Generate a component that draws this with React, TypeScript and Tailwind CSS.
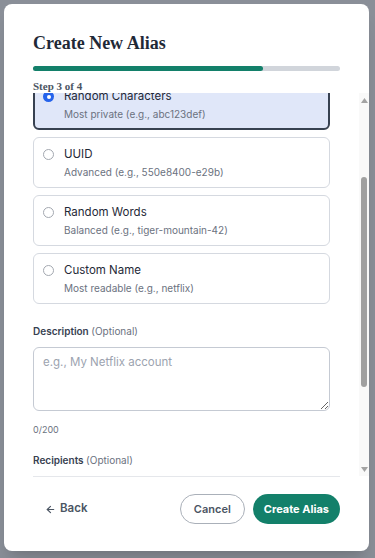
import React, { useEffect, useRef } from 'react';
import { ArrowLeft, ChevronDown } from 'lucide-react';

interface FormatOption {
  id: string;
  title: string;
  hint: string;
}

const formats: FormatOption[] = [
  { id: 'random', title: 'Random Characters', hint: 'Most private (e.g., abc123def)' },
  { id: 'uuid', title: 'UUID', hint: 'Advanced (e.g., 550e8400-e29b)' },
  { id: 'words', title: 'Random Words', hint: 'Balanced (e.g., tiger-mountain-42)' },
  { id: 'custom', title: 'Custom Name', hint: 'Most readable (e.g., netflix)' },
];

const FormatCard: React.FC<{ option: FormatOption; selected: boolean; cardRef?: React.Ref<HTMLLabelElement> }> = ({
  option,
  selected,
  cardRef,
}) => {
  return (
    <label
      ref={cardRef}
      className={
        selected
          ? 'flex items-start gap-[10px] rounded-md border-2 border-[#374151] bg-[#e0e7f9] pl-[8px] py-[6px]'
          : 'flex items-start gap-[10px] rounded-md border border-[#d5d9e0] bg-white pl-[9px] py-[7px]'
      }
    >
      <span className="flex h-[19px] items-center">
        {selected ? (
          <span className="flex h-[11px] w-[11px] items-center justify-center rounded-full bg-[#2563eb]">
            <span className="h-[4px] w-[4px] rounded-full bg-white" />
          </span>
        ) : (
          <span className="h-[11px] w-[11px] rounded-full border border-[#a3a8b0] bg-white" />
        )}
      </span>
      <span className="flex flex-col">
        <span className="text-[11.5px] leading-[19px] text-[#1f2937]">{option.title}</span>
        <span className="text-[10px] leading-4 text-[#6b7280]">{option.hint}</span>
      </span>
    </label>
  );
};

// drawn scroll track, the browser hides its own
const ScrollTrack: React.FC = () => (
  <div className="flex w-[10px] flex-col items-center bg-[#f9f9f9]">
    <svg width="7" height="5" viewBox="0 0 7 5" className="mt-[5px]">
      <path d="M3.5 0 L7 5 L0 5 Z" fill="#a3a3a3" />
    </svg>
    <div className="mt-[74px] h-[210px] w-[6px] rounded-full bg-[#a0a0a0]" />
    <div className="flex-1" />
    <svg width="7" height="5" viewBox="0 0 7 5" className="mb-[4px]">
      <path d="M0 0 L7 0 L3.5 5 Z" fill="#a3a3a3" />
    </svg>
  </div>
);

export default function App() {
  const scrollRef = useRef<HTMLDivElement>(null);
  const firstCardRef = useRef<HTMLLabelElement>(null);

  useEffect(() => {
    const box = scrollRef.current;
    const card = firstCardRef.current;
    if (!box || !card) return;
    const offset = card.getBoundingClientRect().top - box.getBoundingClientRect().top;
    box.scrollTop = offset + 14;
  }, []);

  return (
    <div className="flex h-[558px] w-[375px] bg-[#8a8f98] pl-1 pt-1" style={{ fontFamily: 'Inter, "Noto Sans", sans-serif' }}>
      <div className="flex h-[547px] w-[365px] flex-col rounded-lg bg-white shadow-xl">
        {/* header */}
        <div className="px-[29px] pt-[25px]">
          <h2 className="text-[18px] font-bold leading-7 text-[#1f2937]" style={{ fontFamily: '"Liberation Serif", "DejaVu Serif", serif' }}>
            Create New Alias
          </h2>
          <div className="mt-[9px] h-[5px] w-full rounded-full bg-[#d1d5db]">
            <div className="h-full w-3/4 rounded-full bg-[#13806a]" />
          </div>
          <p
            className="mt-[9px] text-[11px] font-bold leading-[13px] text-[#4b5563]"
            style={{ fontFamily: '"Liberation Serif", "DejaVu Serif", serif' }}
          >
            Step 3 of 4
          </p>
        </div>

        {/* scrollable body */}
        <div className="flex min-h-0 flex-1">
          <div ref={scrollRef} className="flex-1 overflow-y-auto pl-[29px] pr-[29px]">
            <div className="pt-[10px]">
              <p className="text-[10px] font-semibold leading-4 text-[#374151]">Domain</p>
              <div className="mt-2 flex h-10 items-center justify-between rounded-md border border-[#c5cad3] px-3 text-[11.5px] text-[#1f2937]">
                <span>@relay.example.com</span>
                <ChevronDown size={14} className="text-[#6b7280]" />
              </div>
              <p className="mt-4 text-[10px] font-semibold leading-4 text-[#374151]">Alias Format</p>
            </div>

            <div className="mt-2 flex flex-col gap-[7px]">
              {formats.map((f, i) => (
                <FormatCard key={f.id} option={f} selected={i === 0} cardRef={i === 0 ? firstCardRef : undefined} />
              ))}
            </div>

            <p className="mt-[19px] text-[10px] font-semibold leading-4 text-[#374151]">
              Description <span className="font-normal text-[#6b7280]">(Optional)</span>
            </p>
            <textarea
              rows={3}
              placeholder="e.g., My Netflix account"
              className="mt-2 block h-[64px] w-full rounded-md border border-[#c5cad3] px-[9px] py-[6px] text-[11.5px] text-[#1f2937] placeholder:text-[#9ca3af] focus:outline-none"
            />
            <p className="mt-[11px] text-[9px] leading-4 text-[#6b7280]">0/200</p>

            <p className="mt-[14px] text-[10px] font-semibold leading-4 text-[#374151]">
              Recipients <span className="font-normal text-[#6b7280]">(Optional)</span>
            </p>
            <div className="mt-2 flex h-10 items-center rounded-md border border-[#c5cad3] px-3 text-[11.5px] text-[#9ca3af]">
              Add a recipient email
            </div>
            <p className="mt-2 pb-20 text-[9px] leading-4 text-[#6b7280]">
              Forwarded mail goes to your default recipient if none is added.
            </p>
          </div>
          <ScrollTrack />
        </div>

        {/* footer */}
        <div className="mx-[29px] flex items-center justify-between border-t border-[#e5e7eb] pb-[27px] pt-[17px]">
          <button className="flex h-[30px] items-center gap-[4px] px-3 text-[11.5px] font-semibold text-[#4b5563]">
            <ArrowLeft size={11} strokeWidth={2.5} />
            Back
          </button>
          <div className="flex items-center gap-2">
            <button className="h-[30px] rounded-full border border-[#aab0b9] px-[13px] text-[11px] font-semibold text-[#4b5563]">
              Cancel
            </button>
            <button className="h-[30px] rounded-full bg-[#13806a] px-[11px] text-[11px] font-bold text-white">
              Create Alias
            </button>
          </div>
        </div>
      </div>
    </div>
  );
}
